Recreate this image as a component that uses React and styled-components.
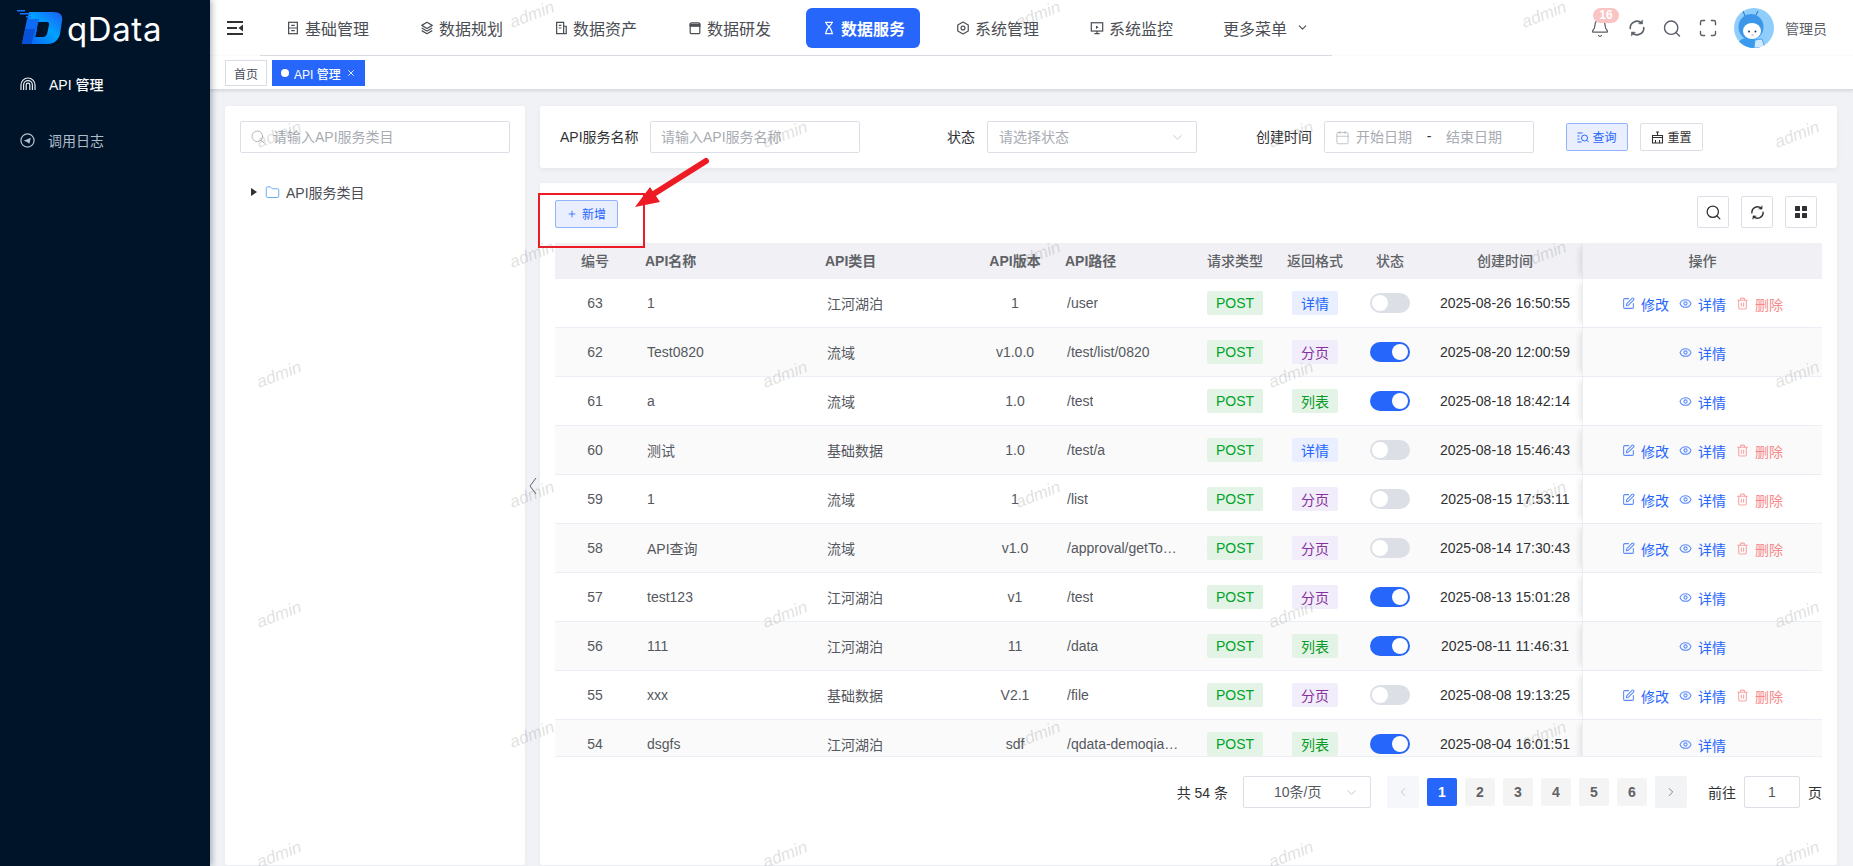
import React from "react";
import styled, { createGlobalStyle } from "styled-components";
import {
  Bell,
  Calendar,
  ChevronDown,
  ChevronLeft,
  ChevronRight,
  Eye,
  Folder,
  Maximize,
  Plus,
  Search,
  SquarePen,
  Trash2,
  X,
} from "lucide-react";

const BLUE = "#2666fb";
const FONT = `"Liberation Sans", "Noto Sans CJK SC", sans-serif`;

const GlobalStyle = createGlobalStyle`
  html, body {
    margin: 0;
    padding: 0;
    height: 100%;
    overflow: hidden;
    background: #f0f2f6;
    font-family: ${FONT};
    font-size: 14px;
    color: #303133;
  }
  * { box-sizing: border-box; }
`;

const Page = styled.div`
  position: relative;
  display: flex;
  width: 1853px;
  height: 866px;
  overflow: hidden;
`;

const Sidebar = styled.aside`
  position: relative;
  z-index: 3;
  flex: 0 0 210px;
  background: #001429;
  box-shadow: 2px 0 6px rgba(0, 21, 41, 0.3);
`;

const Brand = styled.div`
  display: flex;
  align-items: center;
  height: 56px;
  padding-left: 17px;
  gap: 4px;
`;

const BrandName = styled.span`
  font-family: Inter, sans-serif;
  font-size: 33px;
  line-height: 1;
  letter-spacing: 0.6px;
  color: #fff;
  margin-top: 3px;
`;

const SideMenu = styled.nav`
  padding-top: 1px;
`;

const SideItem = styled.div`
  display: flex;
  align-items: center;
  height: 56px;
  padding: 0 0 2px 20px;
  gap: 13px;
  font-weight: ${(p) => (p.$active ? 500 : 400)};
  color: ${(p) => (p.$active ? "#fff" : "#aebbc8")};
`;

const Main = styled.main`
  flex: 1;
  min-width: 0;
  display: flex;
  flex-direction: column;
`;

const Header = styled.header`
  flex: 0 0 56px;
  display: flex;
  align-items: stretch;
  background: #fff;
  box-shadow: 0 1px 4px rgba(0, 21, 41, 0.06);
`;

const Toggler = styled.div`
  flex: 0 0 50px;
  display: flex;
  align-items: center;
  padding-left: 17px;
`;

const NavBar = styled.nav`
  flex: 0 0 1072px;
  display: flex;
  align-items: center;
  gap: 20px;
  padding-left: 10px;
  border-bottom: 1px solid #dcdfe6;
`;

const NavItem = styled.div`
  flex: 0 0 114px;
  height: 40px;
  display: flex;
  align-items: center;
  padding-left: 16px;
  gap: 5px;
  font-size: 16px;
  border-radius: 6px;
  white-space: nowrap;
  font-weight: ${(p) => (p.$active ? 700 : 400)};
  color: ${(p) => (p.$active ? "#fff" : "#4b4e54")};
  background: ${(p) => (p.$active ? BLUE : "transparent")};
`;

const MoreItem = styled(NavItem)`
  gap: 9px;
  color: #4b4e54;
  padding-left: 15px;
`;

const HeaderRight = styled.div`
  flex: 1;
  display: flex;
  align-items: center;
  padding-left: 258px;
  color: #5a5e66;
`;

const HeadIcon = styled.div`
  position: relative;
  width: 20px;
  display: flex;
  justify-content: center;
  margin-right: ${(p) => p.$gap}px;
`;

const Badge = styled.span`
  position: absolute;
  top: -10px;
  left: 3px;
  width: 26px;
  height: 15px;
  border-radius: 8px;
  background: #fbc4c4;
  color: #fff;
  font-size: 12px;
  font-weight: 700;
  line-height: 15px;
  text-align: center;
`;

const Avatar = styled.div`
  width: 40px;
  height: 40px;
  border-radius: 50%;
  overflow: hidden;
  flex: 0 0 40px;
`;

const UserName = styled.span`
  margin-left: 11px;
  padding-bottom: 1px;
  color: #5a5e66;
  white-space: nowrap;
`;

const TabsBar = styled.div`
  flex: 0 0 34px;
  display: flex;
  align-items: center;
  gap: 5px;
  padding: 0 0 0 15px;
  background: #fff;
  border-bottom: 1px solid #d8dce5;
  box-shadow: 0 1px 3px rgba(0, 0, 0, 0.12);
`;

const Tab = styled.div`
  height: 26px;
  display: flex;
  align-items: center;
  gap: 5px;
  padding: 1px 8px 0;
  font-size: 12px;
  border: 1px solid ${(p) => (p.$active ? BLUE : "#d8dce5")};
  color: ${(p) => (p.$active ? "#fff" : "#495060")};
  background: ${(p) => (p.$active ? BLUE : "#fff")};
  font-weight: ${(p) => (p.$active ? 500 : 400)};
`;

const TabDot = styled.i`
  width: 8px;
  height: 8px;
  border-radius: 50%;
  background: #fff;
`;

const Content = styled.div`
  flex: 1;
  min-height: 0;
  display: flex;
  gap: 15px;
  padding: 16px 16px 1px 15px;
`;

const Card = styled.section`
  background: #fff;
  border-radius: 3px;
  box-shadow: 0 1px 4px rgba(0, 0, 0, 0.04);
`;

const TreePanel = styled(Card)`
  position: relative;
  flex: 0 0 300px;
  padding: 15px;
`;

const Collapse = styled.div`
  position: absolute;
  right: -15px;
  top: 371px;
  width: 15px;
  display: flex;
  justify-content: center;
  color: #606266;
`;

const Field = styled.div`
  height: 32px;
  display: flex;
  align-items: center;
  flex: ${(p) => (p.$width ? `0 0 ${p.$width}px` : "1")};
  padding: 0 ${(p) => p.$pad ?? 11}px 2px;
  gap: ${(p) => p.$gap ?? 6}px;
  border: 1px solid #dcdfe6;
  border-radius: 2px;
  background: #fff;
  color: #a8abb2;
  white-space: nowrap;

  svg {
    flex: none;
    margin-top: 2px;
  }
`;

const TreeRow = styled.div`
  display: flex;
  align-items: center;
  margin-top: 24px;
  height: 30px;
  padding-left: 11px;
  color: #4b4e54;
  gap: 6px;
`;

const Caret = styled.i`
  width: 0;
  height: 0;
  margin-right: 2px;
  border-left: 6px solid #303133;
  border-top: 4.5px solid transparent;
  border-bottom: 4.5px solid transparent;
`;

const Right = styled.div`
  flex: 1;
  min-width: 0;
  display: flex;
  flex-direction: column;
  gap: 15px;
`;

const FilterCard = styled(Card)`
  flex: 0 0 62px;
  display: flex;
  align-items: center;
  padding: 0 20px;
  box-shadow: 0 2px 6px rgba(0, 0, 0, 0.05);
`;

const FilterGroup = styled.div`
  display: flex;
  align-items: center;
  gap: 12px;
  margin-right: ${(p) => p.$gap ?? 59}px;
`;

const FilterLabel = styled.label`
  width: ${(p) => p.$width}px;
  padding-bottom: 2px;
  text-align: right;
  white-space: nowrap;
  color: #303133;
`;

const RangeText = styled.span`
  width: 56px;
  flex: none;
`;

const RangeDash = styled.span`
  color: #303133;
  width: 22px;
  text-align: center;
  flex: none;
`;

const SelectArrow = styled.div`
  margin-left: auto;
  display: flex;
  color: #b4b7bd;
`;

const ActionButton = styled.button`
  height: 28px;
  display: inline-flex;
  align-items: center;
  justify-content: center;
  gap: ${(p) => p.$iconGap ?? 3}px;
  padding: 0 0 2px;
  width: ${(p) => p.$width}px;
  margin-right: ${(p) => p.$gap ?? 0}px;
  font: 12px ${FONT};
  border-radius: 2px;
  border: 1px solid ${(p) => (p.$primary ? "#93b3fd" : "#dcdfe6")};
  color: ${(p) => (p.$primary ? BLUE : "#303133")};
  background: ${(p) => (p.$primary ? "#e9efff" : "#fff")};

  svg {
    margin-top: 2px;
  }
`;

const TableCard = styled(Card)`
  position: relative;
  flex: 1;
  min-height: 0;
  padding: 0 15px;
`;

const Toolbar = styled.div`
  height: 60px;
  display: flex;
  align-items: flex-end;
  justify-content: space-between;
  padding-bottom: 15px;
`;

const SquareTools = styled.div`
  display: flex;
  gap: 12px;
  padding-right: 5px;
`;

const SquareButton = styled.div`
  width: 32px;
  height: 32px;
  display: flex;
  align-items: center;
  justify-content: center;
  border: 1px solid #dcdfe6;
  border-radius: 2px;
  color: #303133;
`;

const COLUMNS = "80px 180px 160px 80px 140px 80px 80px 73px 154px 240px";

const HeadRow = styled.div`
  display: grid;
  grid-template-columns: ${COLUMNS};
  height: 36px;
  background: #f0f0f5;
  color: #606266;
  font-weight: 700;
  align-items: stretch;
`;

const HeadCell = styled.div`
  display: flex;
  align-items: center;
  padding-left: ${(p) => (p.$left ? "10px" : 0)};
  padding-bottom: 3px;
  padding-right: ${(p) => p.$shift ?? 0}px;
  justify-content: ${(p) => (p.$left ? "flex-start" : "center")};
  white-space: nowrap;
  ${(p) => p.$fixed && "box-shadow: -6px 0 6px -4px rgba(0,0,0,.1); border-left: 1px solid #e4e6ec; z-index: 1;"}
`;

const LightHead = styled(HeadCell)`
  font-weight: 500;
`;

const TableBody = styled.div`
  height: 478px;
  overflow: hidden;
  border-bottom: 1px solid #ebeef5;
`;

const Row = styled.div`
  display: grid;
  grid-template-columns: ${COLUMNS};
  height: 49px;
  border-bottom: 1px solid #ebeef5;
  background: ${(p) => (p.$stripe ? "#fafafa" : "#fff")};
  color: #55585e;
`;

const Cell = styled.div`
  display: flex;
  align-items: center;
  min-width: 0;
  padding-left: ${(p) => (p.$left ? "12px" : 0)};
  justify-content: ${(p) => (p.$left ? "flex-start" : "center")};
  white-space: nowrap;
`;

const Ellipsis = styled.span`
  display: block;
  max-width: 112px;
  overflow: hidden;
  text-overflow: ellipsis;
`;

const TimeText = styled.span`
  color: #303133;
`;

const OpCell = styled(Cell)`
  gap: 10px;
  padding-top: 1px;
  border-left: 1px solid #ebeef5;
  box-shadow: -6px 0 6px -4px rgba(0, 0, 0, 0.1);
  z-index: 1;
  background: inherit;
`;

const OpLink = styled.span`
  display: inline-flex;
  align-items: center;
  gap: 6px;
  color: ${(p) => (p.$danger ? "#f78989" : BLUE)};

  svg {
    opacity: 0.75;
  }
`;

const TAG_STYLES = {
  POST: ["#e3f4e6", "#00a32a"],
  详情: ["#e9efff", BLUE],
  分页: ["#f1edfa", "#85309e"],
  列表: ["#e3f4e6", "#0a9a2a"],
};

const Tag = styled.span`
  width: ${(p) => p.$width}px;
  height: 24px;
  display: flex;
  align-items: center;
  justify-content: center;
  border-radius: 2px;
  background: ${(p) => TAG_STYLES[p.$kind][0]};
  color: ${(p) => TAG_STYLES[p.$kind][1]};
`;

const Switch = styled.span`
  position: relative;
  width: 40px;
  height: 20px;
  margin-right: 3px;
  border-radius: 10px;
  background: ${(p) => (p.$on ? BLUE : "#dcdfe6")};

  &::after {
    content: "";
    position: absolute;
    top: 2px;
    left: ${(p) => (p.$on ? "22px" : "2px")};
    width: 16px;
    height: 16px;
    border-radius: 50%;
    background: #fff;
  }
`;

const Pager = styled.div`
  display: flex;
  align-items: center;
  justify-content: flex-end;
  padding-top: 19px;
  white-space: nowrap;
  color: #4b4e54;
`;

const PageTotal = styled.span`
  margin-right: 15px;
  padding-bottom: 1px;
  color: #303133;
`;

const PageSize = styled(Field)`
  justify-content: flex-start;
  color: #55585e;
  padding-left: 30px;
  margin-right: 16px;
`;

const PageArrow = styled.div`
  width: 32px;
  height: 32px;
  display: flex;
  align-items: center;
  justify-content: center;
  border-radius: 2px;
  background: ${(p) => (p.$disabled ? "#f6f7fa" : "#f2f3f5")};
  color: ${(p) => (p.$disabled ? "#b4b7bd" : "#606266")};
`;

const PageList = styled.div`
  display: flex;
  gap: 8px;
  margin: 0 8px;
`;

const PageNum = styled.div`
  width: 30px;
  height: 28px;
  display: flex;
  align-items: center;
  justify-content: center;
  border-radius: 2px;
  font-weight: 700;
  background: ${(p) => (p.$active ? BLUE : "#f4f4f5")};
  color: ${(p) => (p.$active ? "#fff" : "#606266")};
`;

const JumpLabel = styled.span`
  margin-left: ${(p) => p.$left}px;
  margin-right: ${(p) => p.$right}px;
  padding-bottom: 1px;
  color: #303133;
`;

const JumpInput = styled(Field)`
  justify-content: center;
  padding-bottom: 0;
  color: #55585e;
`;

const Annotation = styled.div`
  position: absolute;
  left: -2px;
  top: 10px;
  width: 107px;
  height: 55px;
  border: 2px solid #ed1c24;
  pointer-events: none;
`;

const ArrowMark = styled.svg`
  position: absolute;
  left: 628px;
  top: 155px;
  z-index: 2;
  pointer-events: none;
`;

const WatermarkLayer = styled.div`
  position: absolute;
  left: -100px;
  top: -45px;
  z-index: 2;
  display: grid;
  grid-template-columns: repeat(8, 253px);
  grid-auto-rows: 120px;
  pointer-events: none;
`;

const WatermarkCell = styled.div`
  display: flex;
  align-items: center;
  justify-content: center;
`;

const WatermarkText = styled.span`
  font-size: 17px;
  font-style: italic;
  color: rgba(110, 110, 110, 0.22);
  transform: rotate(-21deg);
`;

const rows = [
  [63, "1", "江河湖泊", "1", "/user", "详情", false, "2025-08-26 16:50:55", true],
  [62, "Test0820", "流域", "v1.0.0", "/test/list/0820", "分页", true, "2025-08-20 12:00:59", false],
  [61, "a", "流域", "1.0", "/test", "列表", true, "2025-08-18 18:42:14", false],
  [60, "测试", "基础数据", "1.0", "/test/a", "详情", false, "2025-08-18 15:46:43", true],
  [59, "1", "流域", "1", "/list", "分页", false, "2025-08-15 17:53:11", true],
  [58, "API查询", "流域", "v1.0", "/approval/getTodoList", "分页", false, "2025-08-14 17:30:43", true],
  [57, "test123", "江河湖泊", "v1", "/test", "分页", true, "2025-08-13 15:01:28", false],
  [56, "111", "江河湖泊", "11", "/data", "列表", true, "2025-08-11 11:46:31", false],
  [55, "xxx", "基础数据", "V2.1", "/file", "分页", false, "2025-08-08 19:13:25", true],
  [54, "dsgfs", "江河湖泊", "sdf", "/qdata-demoqiantai/api", "列表", true, "2025-08-04 16:01:51", false],
];

const Svg = ({ size = 14, children, ...rest }) => (
  <svg width={size} height={size} viewBox="0 0 16 16" fill="none" stroke="currentColor" strokeWidth="1.4" {...rest}>
    {children}
  </svg>
);

const navItems = [
  {
    label: "基础管理",
    icon: (
      <Svg>
        <rect x="3" y="1.5" width="10" height="13" />
        <path d="M3 8h10M6 5h4M6 11h4" />
      </Svg>
    ),
  },
  {
    label: "数据规划",
    icon: (
      <Svg>
        <path d="M8 1.5 14 5 8 8.5 2 5zM2 8l6 3.5L14 8M2 11l6 3.5 6-3.5" strokeLinejoin="round" />
      </Svg>
    ),
  },
  {
    label: "数据资产",
    icon: (
      <Svg>
        <path d="M3 14.5v-13h8v13zM11 6h3v8.5H3M5.5 5h3M5.5 8h3" />
      </Svg>
    ),
  },
  {
    label: "数据研发",
    icon: (
      <Svg>
        <rect x="2.5" y="2" width="11" height="12.5" rx="1.5" />
        <path d="M2.5 3.5h11v2.5h-11z" fill="currentColor" />
      </Svg>
    ),
  },
  {
    label: "数据服务",
    active: true,
    icon: (
      <Svg>
        <path d="M3.5 1.5h9M3.5 14.5h9M4.5 1.5c0 4 7 5 7 13M11.5 1.5c0 4-7 5-7 13" />
      </Svg>
    ),
  },
  {
    label: "系统管理",
    icon: (
      <Svg>
        <path d="M8 1.2 14 4.6v6.8l-6 3.4-6-3.4V4.6z" strokeLinejoin="round" />
        <circle cx="8" cy="8" r="2.2" />
      </Svg>
    ),
  },
  {
    label: "系统监控",
    icon: (
      <Svg>
        <rect x="1.5" y="2" width="13" height="9.5" />
        <path d="M8 11.5v3M5 14.5h6" />
        <path d="M6.8 5v4l3-2z" fill="currentColor" stroke="none" />
      </Svg>
    ),
  },
];

const LogoMark = () => (
  <svg width="46" height="36" viewBox="0 0 46 36">
    <defs>
      <linearGradient id="logoFill" x1="0" y1="1" x2="1" y2="0">
        <stop offset="0" stopColor="#0a5cf0" />
        <stop offset="0.55" stopColor="#00a2ff" />
        <stop offset="1" stopColor="#1c5df5" />
      </linearGradient>
    </defs>
    <path
      d="M12 2h24c7 0 10 3 9 9l-2 13c-1.500 6-6 10-12 10H6l4-15h10l-2 8h8c2 0 3-1 4-3l2-9c.5-2-.5-3-2-3H10z"
      fill="url(#logoFill)"
    />
    <path d="M10 9h12l-5.500 25H5z" fill="#0d6bf5" />
    <path d="M8 19h10l-3.500 15H5z" fill="#0750d8" />
    <path d="M0 0h8v1.500H0zM3 3h11v1.500H3zM9 6h5v1.500H9z" fill="#1a73ff" />
  </svg>
);

const Fingerprint = () => (
  <svg width="16" height="14" viewBox="0 0 16 14" fill="none" stroke="#e8edf2" strokeWidth="1.2">
    <path d="M1 13V8a7 7 0 0 1 14 0v5" />
    <path d="M3.600 13V8a4.400 4.400 0 0 1 8.800 0v5" />
    <path d="M6.200 13V8a1.800 1.800 0 0 1 3.600 0v5" />
  </svg>
);

const SendCircle = () => (
  <svg width="15" height="15" viewBox="0 0 16 16" fill="none" stroke="#b6c2cd" strokeWidth="1.300">
    <circle cx="8" cy="8" r="7" />
    <path d="M4 8.200 11.500 5 10 11.500 7.500 9.500z" fill="#b6c2cd" stroke="none" />
  </svg>
);

const RefreshIcon = ({ size, width = 1.8 }) => (
  <svg width={size} height={size} viewBox="0 0 20 20" fill="none" stroke="currentColor" strokeWidth={width} strokeLinecap="round">
    <path d="M2.500 10.500A7.500 7.500 0 0 1 15 4.400" />
    <path d="M17.500 9.500A7.500 7.500 0 0 1 5 15.600" />
    <path d="M16.300 1.500 16 5.600l-4-.4z" fill="currentColor" strokeWidth="0.600" />
    <path d="M3.700 18.500 4 14.400l4 .4z" fill="currentColor" strokeWidth="0.600" />
  </svg>
);

const CollapseIcon = () => (
  <svg width="8" height="18" viewBox="0 0 8 18" fill="none" stroke="currentColor" strokeWidth="1">
    <path d="M7 1 1 9l6 8" />
  </svg>
);

const HeadAvatar = () => (
  <svg width="40" height="40" viewBox="0 0 40 40">
    <rect width="40" height="40" fill="#8fcdfb" />
    <path d="M2 40c1-7 6-10 12-10l10 2 4 8z" fill="#3a9bee" />
    <ellipse cx="17" cy="19" rx="12.500" ry="13" fill="#3c97ea" />
    <ellipse cx="18" cy="23" rx="9" ry="8" fill="#fff" />
    <circle cx="15" cy="23.500" r="1" fill="#1e3a5f" />
    <circle cx="21.500" cy="23.500" r="1" fill="#1e3a5f" />
    <path d="M17.500 27h2" stroke="#d06a6a" strokeWidth="0.800" />
    <path d="M11 8 9 3M22 7l2-4" stroke="#2f84d8" strokeWidth="1.200" />
    <path d="M21 32l7-1 3 9H20z" fill="#cfe9fd" stroke="#3a9bee" strokeWidth="0.800" />
  </svg>
);

const ToggleIcon = () => (
  <svg width="16" height="14" viewBox="0 0 16 14" fill="#303133">
    <rect x="0" y="0" width="16" height="2" />
    <rect x="0" y="6" width="10" height="2" />
    <rect x="0" y="12" width="16" height="2" />
    <path d="M16 3.500v7L11.500 7z" />
  </svg>
);

const GridIcon = () => (
  <svg width="14" height="14" viewBox="0 0 14 14" fill="#303133">
    <rect x="1" y="1" width="5" height="5" rx="0.500" />
    <rect x="8" y="1" width="5" height="5" rx="0.500" />
    <rect x="1" y="8" width="5" height="5" rx="0.500" />
    <rect x="8" y="8" width="5" height="5" rx="0.500" />
  </svg>
);

const QueryIcon = () => (
  <svg width="12" height="12" viewBox="0 0 12 12" fill="none" stroke="currentColor" strokeWidth="1">
    <path d="M.5 2h5M.5 5h2M.5 8h2M.5 11h4" />
    <circle cx="7.500" cy="7" r="3" />
    <path d="m9.700 9.200 2 2" />
  </svg>
);

const BrushIcon = () => (
  <svg width="13" height="13" viewBox="0 0 13 13" fill="none" stroke="currentColor" strokeWidth="1.100">
    <path d="M6.500 1v3M5 1h3M1.500 6.500h10v5.500h-10zM1.500 4.500h10v2h-10zM4.500 9v3M8.500 9v3" />
  </svg>
);

function Watermarks() {
  const cells = [];
  for (let r = 0; r < 8; r++) {
    for (let c = 0; c < 8; c++) {
      cells.push(
        <WatermarkCell key={`${r}-${c}`}>
          {c > 0 && (r + c) % 2 === 0 && <WatermarkText>admin</WatermarkText>}
        </WatermarkCell>
      );
    }
  }
  return <WatermarkLayer>{cells}</WatermarkLayer>;
}

function ApiRow({ row, stripe }) {
  const [id, name, category, version, path, format, enabled, time, editable] = row;
  return (
    <Row $stripe={stripe}>
      <Cell>{id}</Cell>
      <Cell $left>{name}</Cell>
      <Cell $left>{category}</Cell>
      <Cell>{version}</Cell>
      <Cell $left>
        <Ellipsis>{path}</Ellipsis>
      </Cell>
      <Cell>
        <Tag $kind="POST" $width={56}>POST</Tag>
      </Cell>
      <Cell>
        <Tag $kind={format} $width={46}>{format}</Tag>
      </Cell>
      <Cell>
        <Switch $on={enabled} />
      </Cell>
      <Cell>
        <TimeText>{time}</TimeText>
      </Cell>
      <OpCell>
        {editable && (
          <OpLink>
            <SquarePen size={13} />
            修改
          </OpLink>
        )}
        <OpLink>
          <Eye size={13} />
          详情
        </OpLink>
        {editable && (
          <OpLink $danger>
            <Trash2 size={13} />
            删除
          </OpLink>
        )}
      </OpCell>
    </Row>
  );
}

export default function App() {
  return (
    <Page>
      <GlobalStyle />
      <Sidebar>
        <Brand>
          <LogoMark />
          <BrandName>qData</BrandName>
        </Brand>
        <SideMenu>
          <SideItem $active>
            <Fingerprint />
            API 管理
          </SideItem>
          <SideItem>
            <SendCircle />
            调用日志
          </SideItem>
        </SideMenu>
      </Sidebar>

      <Main>
        <Header>
          <Toggler>
            <ToggleIcon />
          </Toggler>
          <NavBar>
            {navItems.map((item) => (
              <NavItem key={item.label} $active={item.active}>
                {item.icon}
                {item.label}
              </NavItem>
            ))}
            <MoreItem>
              更多菜单
              <ChevronDown size={13} />
            </MoreItem>
          </NavBar>
          <HeaderRight>
            <HeadIcon $gap={17}>
              <Bell size={20} strokeWidth={1.5} />
              <Badge>16</Badge>
            </HeadIcon>
            <HeadIcon $gap={15}>
              <RefreshIcon size={18} />
            </HeadIcon>
            <HeadIcon $gap={16}>
              <Search size={21} strokeWidth={1.7} />
            </HeadIcon>
            <HeadIcon $gap={16}>
              <Maximize size={20} strokeWidth={1.7} />
            </HeadIcon>
            <Avatar>
              <HeadAvatar />
            </Avatar>
            <UserName>管理员</UserName>
          </HeaderRight>
        </Header>

        <TabsBar>
          <Tab>首页</Tab>
          <Tab $active>
            <TabDot />
            API 管理
            <X size={10} />
          </Tab>
        </TabsBar>

        <Content>
          <TreePanel>
            <Field $pad={9} $gap={7}>
              <Search size={16} strokeWidth={1.3} />
              请输入API服务类目
            </Field>
            <TreeRow>
              <Caret />
              <Folder size={15} strokeWidth={1.3} color="#4a9bf0" />
              API服务类目
            </TreeRow>
            <Collapse>
              <CollapseIcon />
            </Collapse>
          </TreePanel>

          <Right>
            <FilterCard>
              <FilterGroup>
                <FilterLabel $width={78}>API服务名称</FilterLabel>
                <Field $width={210} $pad={10}>请输入API服务名称</Field>
              </FilterGroup>
              <FilterGroup>
                <FilterLabel $width={56}>状态</FilterLabel>
                <Field $width={210}>
                  请选择状态
                  <SelectArrow>
                    <ChevronDown size={15} strokeWidth={1.2} />
                  </SelectArrow>
                </Field>
              </FilterGroup>
              <FilterGroup $gap={32}>
                <FilterLabel $width={56}>创建时间</FilterLabel>
                <Field $width={210} $pad={10}>
                  <Calendar size={15} strokeWidth={1.1} />
                  <RangeText>开始日期</RangeText>
                  <RangeDash>-</RangeDash>
                  <RangeText>结束日期</RangeText>
                </Field>
              </FilterGroup>
              <ActionButton $primary $width={62} $gap={12}>
                <QueryIcon />
                查询
              </ActionButton>
              <ActionButton $width={63}>
                <BrushIcon />
                重置
              </ActionButton>
            </FilterCard>

            <TableCard>
              <Annotation />
              <Toolbar>
                <ActionButton $primary $width={63} $iconGap={5}>
                  <Plus size={10} />
                  新增
                </ActionButton>
                <SquareTools>
                  <SquareButton>
                    <Search size={17} strokeWidth={1.8} />
                  </SquareButton>
                  <SquareButton>
                    <RefreshIcon size={15} />
                  </SquareButton>
                  <SquareButton>
                    <GridIcon />
                  </SquareButton>
                </SquareTools>
              </Toolbar>

              <HeadRow>
                <LightHead>编号</LightHead>
                <HeadCell $left>API名称</HeadCell>
                <HeadCell $left>API类目</HeadCell>
                <HeadCell>API版本</HeadCell>
                <HeadCell $left>API路径</HeadCell>
                <LightHead>请求类型</LightHead>
                <LightHead>返回格式</LightHead>
                <LightHead $shift={3}>状态</LightHead>
                <LightHead>创建时间</LightHead>
                <LightHead $fixed>操作</LightHead>
              </HeadRow>
              <TableBody>
                {rows.map((row, i) => (
                  <ApiRow key={row[0]} row={row} stripe={i % 2 === 1} />
                ))}
              </TableBody>

              <Pager>
                <PageTotal>共 54 条</PageTotal>
                <PageSize $width={128}>
                  10条/页
                  <SelectArrow>
                    <ChevronDown size={15} strokeWidth={1.2} />
                  </SelectArrow>
                </PageSize>
                <PageArrow $disabled>
                  <ChevronLeft size={14} strokeWidth={1.3} />
                </PageArrow>
                <PageList>
                  {[1, 2, 3, 4, 5, 6].map((n) => (
                    <PageNum key={n} $active={n === 1}>{n}</PageNum>
                  ))}
                </PageList>
                <PageArrow>
                  <ChevronRight size={14} strokeWidth={1.3} />
                </PageArrow>
                <JumpLabel $left={21} $right={8}>前往</JumpLabel>
                <JumpInput $width={56}>1</JumpInput>
                <JumpLabel $left={8} $right={0}>页</JumpLabel>
              </Pager>
            </TableCard>
          </Right>
        </Content>
      </Main>

      <ArrowMark width="84" height="56" viewBox="0 0 84 56">
        <path d="M78 6 24 40" stroke="#ed1c24" strokeWidth="6" strokeLinecap="round" />
        <path d="M7 52 22 32 32 47z" fill="#ed1c24" />
      </ArrowMark>
      <Watermarks />
    </Page>
  );
}
